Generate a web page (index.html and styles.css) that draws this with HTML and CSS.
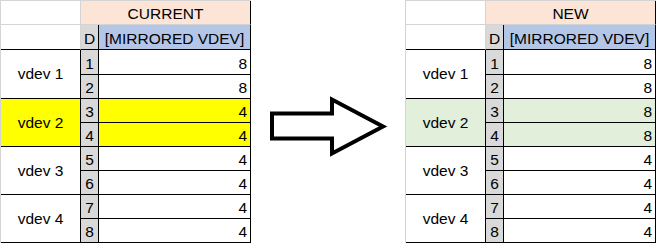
FILE: index.html
```html
<!DOCTYPE html>
<html>
<head>
<meta charset="utf-8">
<link rel="stylesheet" href="styles.css">
</head>
<body>
<div class="page">
  <div class="sheet">
    <div class="c blank top"></div>
    <div class="c title pink">CURRENT</div>
    <div class="c blank"></div>
    <div class="c dhead">D</div>
    <div class="c colhead">[MIRRORED VDEV]</div>

    <div class="c label">vdev 1</div>
    <div class="c d">1</div><div class="c val">8</div>
    <div class="c d">2</div><div class="c val">8</div>

    <div class="c label yellow">vdev 2</div>
    <div class="c d">3</div><div class="c val yellow">4</div>
    <div class="c d">4</div><div class="c val yellow">4</div>

    <div class="c label">vdev 3</div>
    <div class="c d">5</div><div class="c val">4</div>
    <div class="c d">6</div><div class="c val">4</div>

    <div class="c label">vdev 4</div>
    <div class="c d">7</div><div class="c val">4</div>
    <div class="c d">8</div><div class="c val">4</div>
  </div>

  <div class="arrow">
    <svg width="154" height="245" viewBox="251 0 154 245">
      <polygon points="272,113.5 332,113.5 332,99.5 383,126.5 332,153.5 332,138.5 272,138.5" fill="#fff" stroke="#000" stroke-width="4" stroke-linejoin="miter"/>
    </svg>
  </div>

  <div class="sheet">
    <div class="c blank top"></div>
    <div class="c title pink">NEW</div>
    <div class="c blank"></div>
    <div class="c dhead">D</div>
    <div class="c colhead">[MIRRORED VDEV]</div>

    <div class="c label">vdev 1</div>
    <div class="c d">1</div><div class="c val">8</div>
    <div class="c d">2</div><div class="c val">8</div>

    <div class="c label green">vdev 2</div>
    <div class="c d">3</div><div class="c val green">8</div>
    <div class="c d">4</div><div class="c val green">8</div>

    <div class="c label">vdev 3</div>
    <div class="c d">5</div><div class="c val">4</div>
    <div class="c d">6</div><div class="c val">4</div>

    <div class="c label">vdev 4</div>
    <div class="c d">7</div><div class="c val">4</div>
    <div class="c d">8</div><div class="c val">4</div>
  </div>
</div>
</body>
</html>
```

FILE: styles.css
```css
html, body {
  margin: 0;
  padding: 0;
  background: #fff;
}

.page {
  display: flex;
  align-items: flex-start;
  width: 656px;
  height: 245px;
  font-family: "Liberation Sans", Arial, sans-serif;
  font-size: 15.5px;
  color: #000;
}

.sheet {
  display: grid;
  grid-template-columns: 80px 18px 152px;
  grid-template-rows: 24px 25px 25px 24px 24px 24px 24px 24px 24px 24px;
  border-top: 1px solid #d4d4d4;
  border-left: 1px solid #d4d4d4;
}

.c {
  box-sizing: border-box;
  border-right: 1px solid #000;
  border-bottom: 1px solid #000;
  display: flex;
  align-items: flex-end;
  justify-content: center;
  line-height: 16px;
  padding-bottom: 2px;
  white-space: nowrap;
}

.blank {
  border-right-color: #d4d4d4;
  border-bottom-color: #d4d4d4;
}

.blank:not(.top) {
  border-bottom-color: #000;
}

.title {
  grid-column: span 2;
  border-bottom-color: #d4d4d4;
}

.pink { background: #fce4d6; }

.dhead {
  background: #d9d9d9;
}

.colhead {
  background: #b4c6e7;
}

.label {
  grid-row: span 2;
  align-items: center;
  padding-bottom: 0;
}

.d {
  background: #d9d9d9;
}

.val {
  justify-content: flex-end;
  padding-right: 3px;
}

.yellow { background: #ffff00; }
.green { background: #e2efda; }

.arrow {
  width: 154px;
  height: 245px;
}

.arrow svg {
  display: block;
}
```
